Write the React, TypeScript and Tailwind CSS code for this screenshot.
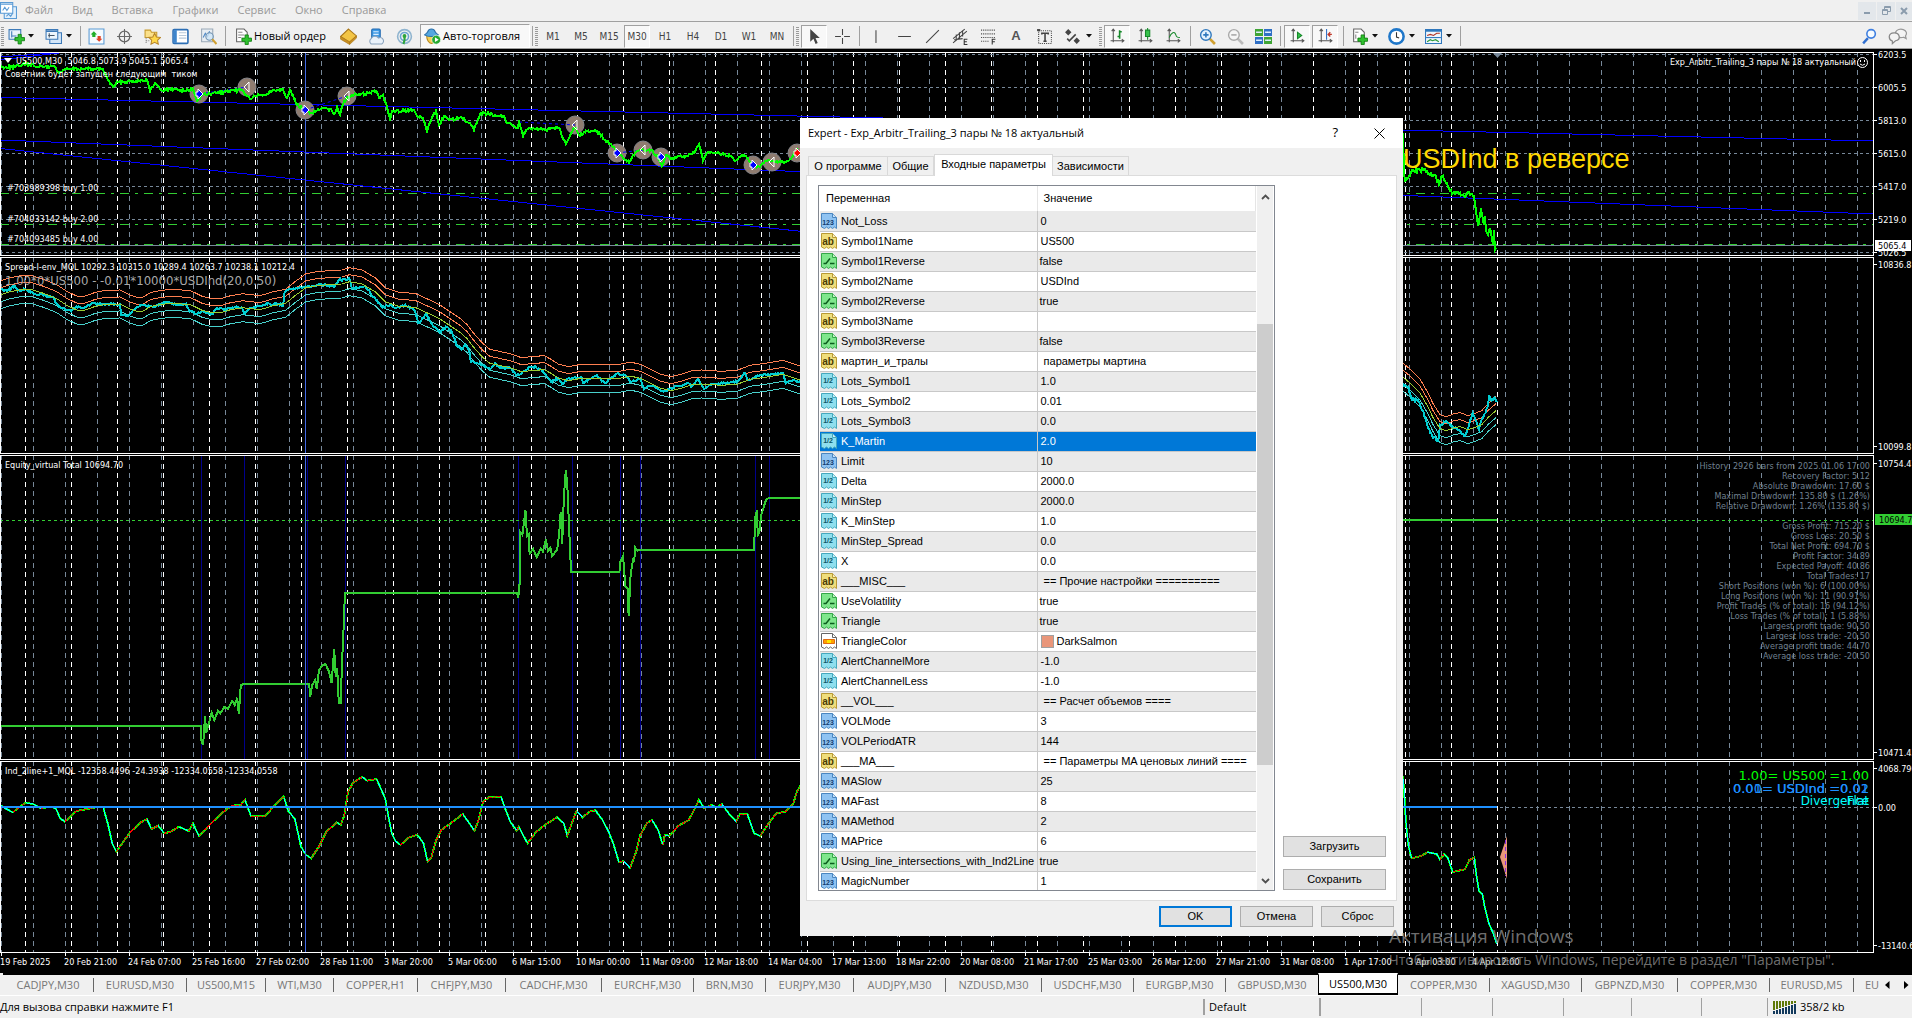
import {ReactNode} from "react";
import clsx from "clsx";

type Kind = "int" | "str" | "bool" | "num" | "color";

interface Param {
    kind: Kind;
    name: string;
    value: string;
}

const params: Param[] = [
    {kind: "int", name: "Not_Loss", value: "0"},
    {kind: "str", name: "Symbol1Name", value: "US500"},
    {kind: "bool", name: "Symbol1Reverse", value: "false"},
    {kind: "str", name: "Symbol2Name", value: "USDInd"},
    {kind: "bool", name: "Symbol2Reverse", value: "true"},
    {kind: "str", name: "Symbol3Name", value: ""},
    {kind: "bool", name: "Symbol3Reverse", value: "false"},
    {kind: "str", name: "мартин_и_тралы", value: " параметры мартина"},
    {kind: "num", name: "Lots_Symbol1", value: "1.0"},
    {kind: "num", name: "Lots_Symbol2", value: "0.01"},
    {kind: "num", name: "Lots_Symbol3", value: "0.0"},
    {kind: "num", name: "K_Martin", value: "2.0"},
    {kind: "int", name: "Limit", value: "10"},
    {kind: "num", name: "Delta", value: "2000.0"},
    {kind: "num", name: "MinStep", value: "2000.0"},
    {kind: "num", name: "K_MinStep", value: "1.0"},
    {kind: "num", name: "MinStep_Spread", value: "0.0"},
    {kind: "num", name: "X", value: "0.0"},
    {kind: "str", name: "___MISC___", value: " == Прочие настройки =========="},
    {kind: "bool", name: "UseVolatility", value: "true"},
    {kind: "bool", name: "Triangle", value: "true"},
    {kind: "color", name: "TriangleColor", value: "DarkSalmon"},
    {kind: "num", name: "AlertChannelMore", value: "-1.0"},
    {kind: "num", name: "AlertChannelLess", value: "-1.0"},
    {kind: "str", name: "__VOL___", value: " == Расчет объемов ===="},
    {kind: "int", name: "VOLMode", value: "3"},
    {kind: "int", name: "VOLPeriodATR", value: "144"},
    {kind: "str", name: "___MA___", value: " == Параметры MA ценовых линий ===="},
    {kind: "int", name: "MASlow", value: "25"},
    {kind: "int", name: "MAFast", value: "8"},
    {kind: "int", name: "MAMethod", value: "2"},
    {kind: "int", name: "MAPrice", value: "6"},
    {kind: "bool", name: "Using_line_intersections_with_Ind2Line", value: "true"},
    {kind: "int", name: "MagicNumber", value: "1"},
];

const chartTabs: [string, number][] = [
    ["CADJPY,M30", 91], ["EURUSD,M30", 93], ["US500,M15", 79], ["WTI,M30", 68], ["COPPER,H1", 84],
    ["CHFJPY,M30", 88], ["CADCHF,M30", 96], ["EURCHF,M30", 92], ["BRN,M30", 72], ["EURJPY,M30", 88],
    ["AUDJPY,M30", 92], ["NZDUSD,M30", 96], ["USDCHF,M30", 92], ["EURGBP,M30", 92], ["GBPUSD,M30", 92],
    ["US500,M30", 80], ["COPPER,M30", 92], ["XAGUSD,M30", 92], ["GBPNZD,M30", 96], ["COPPER,M30", 92],
    ["EURUSD,M5", 84],
];

const stats = [
    "History: 2926 bars from 2025.01.06 17:00", "Recovery Factor: 5.12", "Absolute Drawdown: 17.60 $",
    "Maximal Drawdown: 135.80 $ (1.26%)", "Relative Drawdown: 1.26% (135.80 $)", "",
    "Gross Profit: 715.20 $", "Gross Loss: 20.50 $", "Total Net Profit: 694.70 $", "Profit Factor: 34.89",
    "Expected Payoff: 40.86", "Total Trades: 17", "Short Positions (won %): 6 (100.00%)",
    "Long Positions (won %): 11 (90.91%)", "Profit Trades (% of total): 16 (94.12%)",
    "Loss Trades (% of total): 1 (5.88%)", "Largest profit trade: 90.50", "Largest loss trade: -20.50",
    "Average profit trade: 44.70", "Average loss trade: -20.50",
];

const timeLabels = [
    "19 Feb 2025", "20 Feb 21:00", "24 Feb 07:00", "25 Feb 16:00", "27 Feb 02:00", "28 Feb 11:00", "3 Mar 20:00",
    "5 Mar 06:00", "6 Mar 15:00", "10 Mar 00:00", "11 Mar 09:00", "12 Mar 18:00", "14 Mar 04:00", "17 Mar 13:00",
    "18 Mar 22:00", "20 Mar 08:00", "21 Mar 17:00", "25 Mar 03:00", "26 Mar 12:00", "27 Mar 21:00", "31 Mar 08:00",
    "1 Apr 17:00", "3 Apr 03:00", "4 Apr 12:00",
];

/* ---------- series ---------- */

type Point = [number, number];

const parse = (src: string, kx = 1, ky = 1, dx = 0, dy = 0): Point[] =>
    src.trim().split(/\s+/).map(pair => {
        const [x, y] = pair.split(",").map(Number);
        return [x / kx + dx, y / ky + dy];
    });

const toPath = (points: Point[], shift = 0) =>
    points.map(([x, y], i) => `${i ? "L" : "M"}${x.toFixed(1)} ${(y + shift).toFixed(1)}`).join("");

// fills the gaps between the key points with small ticks
const rough = (points: Point[], amp: number): Point[] => {
    let seed = 7;
    const out: Point[] = [];
    points.forEach(([x, y], i) => {
        out.push([x, y]);
        const next = points[i + 1];
        if (!next) return;
        for (let px = x + 1; px < next[0]; px += 1) {
            seed = (seed * 1103515245 + 12345) % 2147483648;
            const t = (px - x) / (next[0] - x);
            out.push([px, y + (next[1] - y) * t + (seed / 2147483648 - 0.5) * amp]);
        }
    });
    return out;
};

const priceLeft = rough(parse(`0,67 15,67 23,64 30,65 43,67 54,66 59,73 66,69 92,69 102,69 105,73 108,80 113,87 118,82 147,80
150,91 155,83 161,90 176,89 184,91 193,89 197,101 202,95 224,92 242,90 250,99 255,96 265,95 273,90 283,89 287,98 290,90
297,105 305,111 311,113 321,109 331,109 334,114 337,107 340,115 344,101 352,95 365,94 376,91 380,98 383,95 386,103 390,119
392,111 413,110 417,116 423,118 427,131 431,120 436,111 439,125 444,116 449,120 462,118 469,123 474,130 481,113 503,116
508,123 518,128 519,120 523,136 526,130 533,128 546,130 559,128 566,144 571,133 575,128 579,135 587,131 597,131 605,140
612,146 620,155 629,163 635,153 640,150 651,150 658,158 662,166 666,155 671,158 686,156 694,153 699,144 703,161 707,153
719,153 730,156 735,161 742,155 747,158 753,166 760,167 765,161 786,162 791,159 796,151 803,153`), 3);

const priceRight = rough(parse(`1403,133 1404,172 1405,181 1408,178 1412,170 1420,170 1427,171 1432,176 1435,175 1439,185 1442,176
1447,183 1452,194 1458,192 1465,197 1468,192 1474,196 1476,211 1478,226 1481,210 1484,225 1485,216 1486,231 1488,235 1490,228
1493,245 1494,230 1495,250 1496,248`), 4);

const midLeft = parse(`0,120 20,110 45,103 65,105 85,115 110,130 130,150 150,165 165,166 185,155 205,148 235,147 255,162 270,170
280,168 295,155 315,148 345,145 375,150 395,165 415,173 435,172 450,165 475,158 510,164 535,152 560,145 580,120 600,98 620,92
655,88 670,87 685,80 710,87 735,110 755,140 780,153 815,158 835,172 860,190 880,210 900,230 915,250 930,280 945,305 960,325
1000,338 1020,349 1050,347 1065,343 1080,355 1095,370 1115,377 1135,371 1215,370 1235,363 1255,370 1275,385 1295,400 1315,407
1335,400 1355,390 1375,387 1415,391 1445,388 1470,373 1500,367 1535,358 1568,375 1580,378`, 1.96, 3, 0, 255);

const midRight = parse(`0,980 10,988 30,1005 60,1035 80,1070 100,1110 120,1142 140,1148 160,1140 180,1136 205,1145 225,1138
245,1130 265,1108 288,1088`, 3, 3, 1400, 48);

const spreadLeft = rough(parse(`0,103 15,105 28,93 35,107 50,103 65,115 85,120 105,128 110,145 120,160 140,168 150,155 165,160
180,145 200,148 235,148 238,180 250,183 265,160 275,150 300,155 330,140 345,150 365,148 370,165 385,178 395,170 415,178 425,160
440,165 460,155 475,160 480,178 490,160 510,152 525,145 555,150 558,110 575,100 600,97 625,88 655,95 665,75 685,72 690,100
715,93 735,130 750,158 765,150 775,160 795,150 812,165 820,205 835,178 850,215 862,233 875,215 885,228 895,270 905,282 912,268
920,290 923,320 940,325 960,343 970,325 980,338 1000,340 1013,362 1035,340 1050,335 1065,350 1080,380 1095,370 1102,388
1115,370 1140,368 1143,385 1170,360 1185,385 1210,355 1225,360 1235,380 1255,372 1262,402 1275,392 1300,410 1315,400 1350,385
1355,395 1368,372 1380,403 1395,388 1445,380 1460,355 1465,375 1490,360 1535,355 1540,385 1555,375 1575,385`, 1.96, 3, 0, 255), 2);

const spreadRight = rough(parse(`0,1008 10,1008 25,1015 33,1050 55,1060 70,1090 75,1110 85,1140 97,1165 115,1180 120,1130
140,1122 160,1138 175,1145 195,1165 205,1140 218,1095 228,1120 237,1145 245,1115 262,1080 268,1045 275,1058 285,1050
290,1062`, 3, 3, 1400, 48), 3);

const equity = parse(`2,812 393,812 393,850 398,870 402,782 404,835 412,790 415,773 420,795 427,768 432,775 440,755 447,762
455,738 460,750 465,728 468,778 472,690 480,686 606,686 608,727 612,690 618,675 621,703 625,645 632,632 638,627 645,650
650,685 655,582 658,665 661,640 664,745 668,745 670,640 674,500 676,414 1014,414 1015,428 1018,410 1020,232 1024,240 1030,166
1033,243 1036,238 1038,295 1045,282 1052,307 1060,280 1064,290 1070,253 1074,288 1079,278 1082,303 1092,285 1096,235 1099,170
1102,268 1105,130 1109,46 1112,90 1118,310 1120,351 1214,351 1216,320 1221,303 1226,395 1230,400 1232,482 1236,360 1241,310
1243,320 1245,278 1249,287 1253,285 1478,285 1480,190 1484,165 1485,240 1488,235 1492,180 1496,160 1502,133 1508,129
1575,129`, 1.96, 3, 0, 455);

const indLeft = parse(`0,150 10,160 25,172 50,143 65,147 80,160 100,155 110,162 118,190 127,200 150,168 195,155 202,155 212,210
220,265 228,290 255,232 275,203 288,192 297,222 310,212 322,235 335,230 350,215 370,228 378,205 390,243 415,203 440,168 455,152
472,150 480,134 492,183 520,183 540,148 556,125 565,168 578,192 590,275 600,300 610,310 625,275 640,230 660,202 668,210 675,180
682,110 692,83 710,66 720,77 738,72 755,130 762,190 768,235 775,258 785,270 800,248 818,239 830,265 838,320 845,310 855,255
865,225 885,203 907,177 920,205 930,227 938,195 947,140 958,127 982,125 990,160 1000,200 1013,227 1017,215 1025,240 1034,265
1050,232 1070,208 1092,187 1105,205 1112,242 1122,200 1130,168 1142,187 1155,170 1167,166 1180,193 1193,230 1203,270 1213,322
1222,318 1235,338 1247,290 1255,240 1268,205 1278,195 1290,225 1299,270 1303,240 1312,242 1330,212 1350,195 1362,160 1370,134
1380,160 1395,150 1405,158 1415,147 1428,175 1443,200 1450,178 1465,178 1478,235 1490,243 1505,208 1522,175 1540,170 1555,145
1562,110 1568,95 1575,60`, 1.96, 3, 0, 755);

const indRight = parse(`38,900 42,935 48,1030 55,1090 65,1127 95,1120 112,1110 140,1115 150,1130 162,1116 173,1125 188,1165
225,1157 238,1132 253,1125 260,1180 267,1218 277,1225 285,1265 298,1310 308,1330 320,1362`, 3, 2.76, 1390, 450);

const range = (from: number, step: number, count: number) => Array.from({length: count}, (_, i) => from + step * i);

/* ---------- chart ---------- */

const Grid = ({top, bottom}: {top: number; bottom: number}) => (
    <g shapeRendering="crispEdges" fill="none">
        <path d={range(1, 32, 90).map(x => `M${x + 0.5} ${top}V${bottom}`).join("")} stroke="#778899" strokeDasharray="5 4"/>
        <path d={range(25, 46, 33).map(x => `M${x + 0.5} ${top}V${bottom}`).join("")} stroke="#fff" strokeDasharray="5 4"/>
    </g>
);

const CursorLine = ({top, bottom}: {top: number; bottom: number}) => (
    <path d={`M305.5 ${top}V${bottom}`} stroke="#4169e1" shapeRendering="crispEdges"/>
);

interface PanelProps {
    top: number;
    className: string;
    bottom: number;
    axis: [string, number][];
    children: ReactNode;
    overlay?: ReactNode;
    tag?: ReactNode;
}

// one sub-window: the plot with its frame and the value scale on the right
const Panel = ({top, bottom, className, axis, children, overlay, tag}: PanelProps) => (
    <div className={clsx("flex", className)}>
        <div className="relative min-w-0 flex-1 overflow-hidden border border-white">
            <svg className="block h-full w-full" fontFamily="DejaVu Sans Condensed, DejaVu Sans, sans-serif" fontSize="9" fill="#fff">
                <g transform={`translate(-1 ${-top - 1})`}>
                    <Grid top={top} bottom={bottom}/>
                    {children}
                </g>
            </svg>
            {overlay}
        </div>
        <svg className="h-full w-[38px] overflow-visible" fontFamily="DejaVu Sans Condensed, DejaVu Sans, sans-serif" fontSize="9" fill="#fff">
            <g transform={`translate(0 ${-top})`}>
                {axis.map(([label, y]) => (
                    <g key={label}>
                        <path d={`M0 ${y + 0.5}h3`} stroke="#fff"/>
                        <text x="4" y={y + 4}>{label}</text>
                    </g>
                ))}
                {tag}
            </g>
        </svg>
    </div>
);

const buys: Point[] = [[199, 94], [305, 110], [617, 153], [661, 157], [753, 165]];
const closes: Point[] = [[247, 87], [347, 96], [575, 125], [643, 150], [772, 162]];

const Markers = () => (
    <g>
        {[...buys, ...closes, [797, 153] as Point].map(([x, y]) => (
            <circle key={x} cx={x} cy={y} r="9" fill="#8f7c70" stroke="#85858a"/>
        ))}
        <path d="M199 94L247 87M305 110L347 96M519 122L575 125M617 153L643 150" stroke="#00f" strokeDasharray="3 3"/>
    </g>
);

const Arrows = () => (
    <g>
        {[...buys, [797, 153] as Point].map(([x, y]) => (
            <path key={x} d={`M${x - 3} ${y - 2}h2v-3l5 5l-5 5v-3h-2z`} fill={x === 797 ? "#f00" : "#00f"} stroke="#fff"/>
        ))}
        {closes.map(([x, y]) => (
            <path key={x} d={`M${x + 2} ${y - 5}v10l-5 -5z`} fill="none" stroke="#fff"/>
        ))}
    </g>
);

const PricePanel = () => (
    <Panel
        top={52}
        bottom={255}
        className="h-[204px]"
        axis={[["6203.5", 54], ["6005.5", 87], ["5813.0", 120], ["5615.0", 153], ["5417.0", 186], ["5219.0", 219], ["5026.5", 252]]}
        tag={
            <g>
                <rect x="1" y="240" width="36" height="11" fill="#fff"/>
                <text x="4" y="249" fill="#000">5065.4</text>
            </g>
        }
        overlay={
            <div className="absolute top-[3px] right-[5px] flex items-center gap-px font-['DejaVu_Sans_Condensed'] text-[9px] leading-3 text-white">
                Exp_Arbitr_Trailing_3 пары № 18 актуальный
                <svg width="11" height="11" fill="none" stroke="#fff">
                    <circle cx="5.5" cy="5.5" r="5"/>
                    <path d="M3.5 3v2M7.5 3v2M3 7q2.500 2.500 5 0"/>
                </svg>
            </div>
        }
    >
        <g shapeRendering="crispEdges" fill="none">
            <path d={range(54, 33, 7).map(y => `M0 ${y + 0.5}H2600`).join("")} stroke="#778899" strokeDasharray="3 3"/>
            <path d="M0 245.500H2600" stroke="#778899"/>
            <path d="M0 193.500H2600M0 224.500H2600M0 244.500H2600" stroke="#32cd32" strokeDasharray="9 6 3 6"/>
            <path d="M0 57L54 53M0 60L59 53M0 97.500L1873 141M0 140L1873 214M0 148.500L1040 256" stroke="#00f"/>
        </g>
        <CursorLine top={52} bottom={256}/>
        <Markers/>
        <g shapeRendering="crispEdges" fill="none" stroke="#0f0" strokeWidth="2">
            <path d={toPath(priceLeft)}/>
            <path d={toPath(priceRight)}/>
        </g>
        <Arrows/>
        <path d="M1493 53h9l-4.500 5z" fill="#778899"/>
        <path d="M4 58h8l-4 5z"/>
        <text x="16" y="64" xmlSpace="preserve">US500,M30  5046.8 5073.9 5045.1 5065.4</text>
        <text x="5" y="77" xmlSpace="preserve">Советник будет запущен следующим  тиком</text>
        <text x="7" y="191">#703989398 buy 1.00</text>
        <text x="7" y="222">#704033142 buy 2.00</text>
        <text x="7" y="242">#704093485 buy 4.00</text>
        <text x="1403" y="168" fontFamily="Liberation Sans, sans-serif" fontSize="27" fill="#ffd700">USDInd в реверсе</text>
    </Panel>
);

const SpreadPanel = () => (
    <Panel top={257} bottom={453} className="h-[197px]" axis={[["10836.8", 264], ["10099.8", 446]]}>
        <CursorLine top={257} bottom={454}/>
        <g fill="none" shapeRendering="crispEdges">
            {[midLeft, midRight].map((mid, i) => (
                <g key={i}>
                    <path d={toPath(mid, -14)} stroke="#ff7f50"/>
                    <path d={toPath(mid, -7)} stroke="#ff7f50"/>
                    <path d={toPath(mid, 7)} stroke="#48d1cc"/>
                    <path d={toPath(mid, 14)} stroke="#48d1cc"/>
                </g>
            ))}
            <path d={toPath(spreadLeft)} stroke="#00ced1" strokeWidth="2"/>
            <path d={toPath(spreadRight)} stroke="#00ced1" strokeWidth="2"/>
            <path d={toPath(midLeft)} stroke="#9acd32"/>
            <path d={toPath(midRight)} stroke="#9acd32"/>
        </g>
        <text x="5" y="270">Spread-I-env_MQL 10292.3 10315.0 10289.4 10263.7 10238.1 10212.4</text>
        <text x="5" y="285" fontSize="13" fill="#a9a9a9">1.00*0*US500 - -0.01*10000*USDInd(20,0.50)</text>
    </Panel>
);

const EquityPanel = () => (
    <Panel
        top={455}
        bottom={759}
        className="h-[305px]"
        axis={[["10754.47", 463], ["10471.43", 752]]}
        tag={
            <g>
                <rect x="1" y="514" width="37" height="11" fill="#32cd32"/>
                <text x="5" y="523" fill="#000">10694.70</text>
            </g>
        }
        overlay={
            <div className="absolute top-[5px] right-[3px] text-right font-['DejaVu_Sans_Condensed'] text-[9px] leading-[10px] text-[#708090]">
                {stats.map((line, i) => <div key={i} className="h-[10px]">{line}</div>)}
            </div>
        }
    >
        <g shapeRendering="crispEdges" fill="none">
            {[201, 244, 307, 345, 518, 572, 620, 640, 755, 769].map(x => (
                <path key={x} d={`M${x + 0.5} 455V760`} stroke="#00008b"/>
            ))}
            <path d="M0 520.500H2600" stroke="#32cd32" strokeDasharray="3 3"/>
            <path d={toPath(equity)} stroke="#32cd32" strokeWidth="2"/>
            <path d="M1400 520H1497" stroke="#32cd32" strokeWidth="2"/>
        </g>
        <CursorLine top={455} bottom={760}/>
        <text x="5" y="468">Equity_virtual Total 10694.70</text>
    </Panel>
);

// the line is two-tone: one core colour while it falls, the other while it rises
const TwoTone = ({points}: {points: Point[]}) => {
    let falling = "";
    let rising = "";
    points.slice(1).forEach(([x, y], i) => {
        const [px, py] = points[i];
        const piece = `M${px.toFixed(1)} ${py.toFixed(1)}L${x.toFixed(1)} ${y.toFixed(1)}`;
        if (y > py) falling += piece;
        else rising += piece;
    });
    return (
        <g fill="none" shapeRendering="crispEdges">
            <path d={toPath(points)} stroke="#0f0" strokeWidth="2"/>
            <path d={falling} stroke="#0ff"/>
            <path d={rising} stroke="#f00" strokeDasharray="3 1"/>
        </g>
    );
};

const IndicatorPanel = () => (
    <Panel
        top={761}
        bottom={952}
        className="h-[192px]"
        axis={[["4068.790", 768], ["0.00", 807], ["-13140.6", 945]]}
        overlay={
            <div className="absolute top-[7px] right-[4px] text-right font-['DejaVu_Sans'] text-[13px] leading-[13px]">
                <div className="text-[#0f0]">1.00= US500 =1.00</div>
                <div className="relative text-[#1e90ff]">
                    0.00= USDInd =0.02
                    <span className="absolute top-0 right-0">0.01= USDInd =0.01</span>
                </div>
                <div className="relative text-xs leading-[13px] text-[#00ffff]">
                    Divergence
                    <span className="absolute top-0 right-0">Flat</span>
                </div>
            </div>
        }
    >
        <path d="M0 807.500H2600" stroke="#778899" strokeDasharray="3 3" shapeRendering="crispEdges"/>
        <TwoTone points={indLeft}/>
        <TwoTone points={indRight}/>
        <path d="M0 807H1497" stroke="#1e90ff" strokeWidth="2" shapeRendering="crispEdges"/>
        <CursorLine top={761} bottom={953}/>
        <path d="M1500 857l7 -21v43z" fill="#e9967a"/>
        <path d="M1505.500 840v36" stroke="#8a2be2" strokeDasharray="4 3"/>
        <text x="5" y="774">Ind_2line+1_MQL -12358.4496 -24.3938 -12334.0558 -12334.0558</text>
    </Panel>
);

const Chart = () => (
    <main className="flex flex-1 flex-col gap-px bg-black pt-[3px]">
        <PricePanel/>
        <SpreadPanel/>
        <EquityPanel/>
        <IndicatorPanel/>
        <div className="-mt-px flex h-5 overflow-hidden font-['DejaVu_Sans_Condensed'] text-[9px] leading-4 text-white">
            {timeLabels.map(label => (
                <div key={label} className="relative w-16 shrink-0 whitespace-nowrap">
                    <span className="absolute top-0 left-px h-[3px] w-px bg-white"/>
                    <span className="block pt-px">{label}</span>
                </div>
            ))}
        </div>
    </main>
);

/* ---------- toolbar ---------- */

const Icon = ({children, size = 17}: {children: ReactNode; size?: number}) => (
    <svg width={size} height={size} viewBox="0 0 16 16" fill="none" className="shrink-0">{children}</svg>
);

const Sep = ({className = "w-1.5"}: {className?: string}) => (
    <span className={clsx("flex shrink-0 justify-center", className)}><span className="h-5 w-px bg-[#a0a0a0]"/></span>
);

const Grip = () => (
    <span className="flex w-[5px] shrink-0 flex-col items-center gap-px">
        {range(0, 1, 10).map(i => <span key={i} className="h-px w-[3px] bg-[#9a9a9a]"/>)}
    </span>
);

const Tool = ({label, pressed, children, className = "w-7"}: {label: string; pressed?: boolean; children: ReactNode; className?: string}) => (
    <button aria-label={label} className={clsx("flex h-6 shrink-0 items-center justify-center px-px", className)}>
        <span className={clsx("flex h-[23px] w-full items-center justify-center", pressed && "border border-t-[#a0a0a0] border-r-white border-b-white border-l-[#a0a0a0] bg-[#f8f8f8]")}>
            {children}
        </span>
    </button>
);

const Caret = () => (
    <button aria-label="Ещё" className="flex h-6 w-3 shrink-0 items-center">
        <svg width="6" height="4"><path d="M0 0h6l-3 3.500z" fill="#111"/></svg>
    </button>
);

const Plus = ({x, y}: {x: number; y: number}) => (
    <path d={`M${x + 3} ${y}h3v3h3v3h-3v3h-3v-3h-3v-3h3z`} fill="#2fc12f" stroke="#0d7d0d" strokeWidth=".8"/>
);

const Axes = () => <path d="M4 1v12.500M2.500 3L4 1l1.500 2M1.500 12h12.500M12 10.500l2 1.500l-2 1.500" stroke="#555"/>;

const timeframes = ["M1", "M5", "M15", "M30", "H1", "H4", "D1", "W1", "MN"];

const Toolbar = () => (
    <div className="flex h-[27px] items-center overflow-hidden border-b border-[#a0a0a0] bg-[#f0f0f0] pt-[2px]">
        <Grip/>
        <Tool label="Новый график" className="w-[23px]">
            <Icon><path d="M1 1.500h11v9H1z" fill="#eaf3fc" stroke="#3d7ab8"/><path d="M3.500 3v6M3 7.500h5" stroke="#3d7ab8"/><Plus x={6.500} y={6}/></Icon>
        </Tool>
        <Caret/>
        <Tool label="Профили" className="w-[26px]">
            <Icon><path d="M4.500 4.500h11v10h-11z" fill="#d3e6f8" stroke="#3d7ab8"/><path d="M1 1.500h11v9H1z" fill="#eef6fd" stroke="#3d7ab8"/><path d="M1 3h11" stroke="#3d7ab8" strokeWidth="1.500"/><path d="M4 5v4M3 7h6" stroke="#456"/></Icon>
        </Tool>
        <Caret/>
        <Sep className="w-1"/>
        <Tool label="Обзор рынка"><Icon><path d="M1 1h14v14H1z" fill="#f6fbff" stroke="#5b9bd5"/><path d="M5.500 3l3 3h-1.500v2.500H4V6H2.500z" fill="#1fae2a"/><path d="M10.500 13l-3-3H9V7.500h3V10h1.500z" fill="#e0442a"/></Icon></Tool>
        <Tool label="Окно данных"><Icon><circle cx="8" cy="8" r="5" stroke="#666" strokeWidth="1.200"/><path d="M8 1v14M1 8h14" stroke="#666"/></Icon></Tool>
        <Tool label="Навигатор"><Icon><path d="M1 2h5l1 2h5v5H1z" fill="#fbe08a" stroke="#c79a2a"/><path d="M2 9v6M2 12h3" stroke="#888" strokeDasharray="1 1"/><path d="M10 5l1.700 3.400 3.800.5-2.700 2.600.6 3.700L10 13.500l-3.400 1.700.6-3.700L4.500 8.900l3.800-.5z" fill="#ffd84a" stroke="#b8862b"/></Icon></Tool>
        <Tool label="Терминал"><Icon><rect x="1" y="1.500" width="14" height="13" rx="1" fill="#fff" stroke="#2d6fb5" strokeWidth="1.500"/><path d="M1.500 2h3v12h-3z" fill="#3d84cc"/><path d="M6.500 4.500h7M6.500 7h7M6.500 9.500h7" stroke="#b9c9d9"/></Icon></Tool>
        <Tool label="Тестер стратегий"><Icon><path d="M1.500 1h10.500v12H1.500z" fill="#e7edf3" stroke="#9aa9b8"/><path d="M3 9l2-4 2 3 2-5" stroke="#4a86c5"/><circle cx="9" cy="8" r="3.500" fill="#cfe6f8" fillOpacity=".8" stroke="#6d8fae"/><path d="M11.500 10.500l4 4.500" stroke="#d0a030" strokeWidth="2"/></Icon></Tool>
        <Sep/>
        <button className="flex h-6 w-[106px] shrink-0 items-center gap-[2px] pl-[7px] whitespace-nowrap text-black">
            <Icon><path d="M1.500 1h7l3 3v9h-10z" fill="#fff" stroke="#666"/><path d="M3 4h4M3 6.500h6M3 9h3" stroke="#888"/><Plus x={6.500} y={6.500}/></Icon>
            <span className="text-[11px]">Новый ордер</span>
        </button>
        <Tool label="MetaEditor"><Icon><path d="M8 1l7.500 6.500-6.500 6L.5 8z" fill="#f3c545" stroke="#a9771a"/><path d="M.5 8v2.500l8.500 5v-2.500zM9 13v2.500l6.500-6V7.500z" fill="#c98f22" stroke="#a9771a" strokeWidth=".6"/></Icon></Tool>
        <Tool label="Облако"><Icon><rect x="3.500" y="1" width="8" height="9" rx="1" fill="#3f9be6" stroke="#1f67ae"/><path d="M5 3.500h5M5 6h5" stroke="#d7ecff"/><path d="M3 15a3 3 0 0 1 0-5 4 4 0 0 1 7-.5 3 3 0 0 1 3 5.500z" fill="#e9f1f9" stroke="#8aa3bd"/></Icon></Tool>
        <Tool label="Сигналы"><Icon><circle cx="8" cy="8" r="6.500" stroke="#8fb4cf" strokeWidth="1.500"/><circle cx="8" cy="8" r="3.800" stroke="#6aa6cf" strokeWidth="1.500"/><circle cx="8" cy="7.500" r="1.800" fill="#2fa53a"/><path d="M8 8c.5 3 0 5-1 7" stroke="#2fa53a" strokeWidth="2"/></Icon></Tool>
        <button aria-pressed="true" className="ml-[2px] flex h-6 w-[110px] shrink-0 items-center gap-[2px] border border-t-[#a0a0a0] border-r-white border-b-white border-l-[#a0a0a0] bg-[#f8f8f8] pl-[3px] whitespace-nowrap text-black">
            <Icon><path d="M2.500 7h9c0 4-2 7.500-4.500 7.500S2.500 11 2.500 7z" fill="#f4cf55" stroke="#b98a20"/><path d="M.5 6.500C2 5 3 5 3.500 3.500S5 1 7 1s3 1 3.500 2.500 1.500 1.500 3 3c-3 2-10 2-13 0z" fill="#54a7e0" stroke="#2a6fa8"/><circle cx="11.500" cy="11" r="4.200" fill="#25a92f" stroke="#fff" strokeWidth=".6"/><path d="M10.300 8.800v4.400l3.500-2.200z" fill="#fff"/></Icon>
            <span className="text-[11px]">Авто-торговля</span>
        </button>
        <Sep className="w-1"/>
        <Grip/>
        {timeframes.map(tf => (
            <Tool key={tf} label={tf} pressed={tf === "M30"}><span className="font-['DejaVu_Sans_Condensed'] text-[10px] text-[#444]">{tf}</span></Tool>
        ))}
        <Sep className="w-1"/>
        <Grip/>
        <Tool label="Курсор" pressed><Icon><path d="M4 1v12l3-3 2 5 2-1-2-4.500h4z" fill="#444"/></Icon></Tool>
        <Tool label="Перекрестие"><Icon><path d="M8 1v5.500M8 9.500V15M1 8h5.500M9.500 8H15" stroke="#444"/></Icon></Tool>
        <Sep/>
        <Tool label="Вертикальная линия"><Icon><path d="M7.500 2v12" stroke="#444"/></Icon></Tool>
        <Tool label="Горизонтальная линия"><Icon><path d="M2 8h12" stroke="#444"/></Icon></Tool>
        <Tool label="Трендовая линия"><Icon><path d="M2 14L14 2" stroke="#444"/></Icon></Tool>
        <Tool label="Канал"><Icon><path d="M1 10L12 1M1 14L14 3M4 6v6M7 4v7M10 2v6M2 11l8-1" stroke="#444"/><path d="M14.500 10.500H11.500v5h3M11.500 13h2.500" stroke="#333"/></Icon></Tool>
        <Tool label="Фибоначчи"><Icon><path d="M1 2h13M1 5.500h13M1 9h13M1 12.500h8" stroke="#444" strokeDasharray="1 1"/><path d="M14.500 10.500h-3v5M11.500 13h2.500" stroke="#333"/></Icon></Tool>
        <Tool label="Текст"><span className="font-['Liberation_Sans'] text-[13px] font-bold text-[#555]">A</span></Tool>
        <Tool label="Метка"><Icon><path d="M2.500 2.500h12v12h-12z" stroke="#444" strokeDasharray="1 1"/><path d="M1 1h3v2H1z" fill="#444"/><path d="M5.500 6V5h6v1M8.500 5v7.500M7 12.500h3" stroke="#444" strokeWidth="1.500"/></Icon></Tool>
        <Tool label="Стрелки"><Icon><path d="M4 1l3 3-3 3-3-3zM12 9l3 3-3 3-3-3z" fill="#444"/><path d="M3 10l2 2 6-6" stroke="#444" strokeWidth="1.500"/></Icon></Tool>
        <Caret/>
        <Grip/>
        <Tool label="Бары" pressed><Icon><Axes/><path d="M10 2v8M10 3.500h2M8 8h2" stroke="#16882a" strokeWidth="1.500"/></Icon></Tool>
        <Tool label="Свечи"><Icon><Axes/><path d="M10 0v11" stroke="#16882a"/><path d="M8 2h4v6H8z" fill="#35c24a" stroke="#16882a"/></Icon></Tool>
        <Tool label="Линия"><Icon><Axes/><path d="M4 9c2-5 5-6 6-3s2 3 4 3" stroke="#16882a"/></Icon></Tool>
        <Sep/>
        <Tool label="Увеличить"><Icon><path d="M10 10l5 5" stroke="#d0a030" strokeWidth="2.500"/><circle cx="6.500" cy="6.500" r="5" fill="#e3f2fd" stroke="#2f78bd" strokeWidth="1.300"/><path d="M4 6.500h5M6.500 4v5" stroke="#2f78bd" strokeWidth="1.500"/></Icon></Tool>
        <Tool label="Уменьшить"><Icon><path d="M10 10l5 5" stroke="#bbb" strokeWidth="2.500"/><circle cx="6.500" cy="6.500" r="5" fill="#f6f6f6" stroke="#aaa" strokeWidth="1.300"/><path d="M4 6.500h5" stroke="#aaa" strokeWidth="1.500"/></Icon></Tool>
        <Tool label="Мозаика"><Icon><path d="M0 1h7.500v6.500H0zM8.500 8.500H16V15H8.500z" fill="#3fa535"/><path d="M8.500 1H16v6.500H8.500zM0 8.500h7.500V15H0z" fill="#2f6fc5"/><path d="M1 4h5.500M9.500 4H15M1 11.500h5.500M9.500 11.500H15" stroke="#dff0ff" strokeWidth="1.500"/></Icon></Tool>
        <Sep/>
        <Tool label="Автопрокрутка" pressed><Icon><Axes/><path d="M8 4v6l4-3z" fill="#35c24a" stroke="#16882a"/></Icon></Tool>
        <Tool label="Сдвиг графика" pressed><Icon><Axes/><path d="M9 1v10" stroke="#2f6fc5"/><path d="M14 6h-3M12.500 4L10.500 6l2 2" stroke="#c0392b" strokeWidth="1.300"/></Icon></Tool>
        <Sep className="w-2"/>
        <Tool label="Индикаторы" className="w-[25px]"><Icon><path d="M2.500 1h7l3 3v9h-10z" fill="#fff" stroke="#666"/><path d="M4 4h3M4.500 6v4" stroke="#888"/><Plus x={6.500} y={6.500}/></Icon></Tool>
        <Caret/>
        <Tool label="Периоды" className="w-[25px]"><Icon><circle cx="8" cy="8" r="6.700" fill="#fff" stroke="#1f77c9" strokeWidth="2.400"/><path d="M8 4v4.500l2.500 1" stroke="#333"/></Icon></Tool>
        <Caret/>
        <Tool label="Шаблоны" className="w-[25px]"><Icon><path d="M.5 1.500h15v13H.5z" fill="#eef6fd" stroke="#2f78bd"/><path d="M.5 2.500h15" stroke="#2f78bd" strokeWidth="2"/><path d="M2 7l3-1 3 1 3-2h3" stroke="#b03020"/><path d="M1 9h14" stroke="#2f78bd"/><path d="M2 13l3-2 2 1 3-1 3 2" stroke="#2a9a38"/></Icon></Tool>
        <Caret/>
        <Sep className="w-1"/>
        <span className="flex-1"/>
        <Tool label="Поиск"><Icon><path d="M6.500 9.500L2 14.500" stroke="#2f6fd0" strokeWidth="2.200"/><circle cx="9.500" cy="5.500" r="4" fill="#f6fbff" stroke="#3f7fe0" strokeWidth="1.500"/></Icon></Tool>
        <Tool label="Чат" className="w-[29px]"><Icon size={20}><path d="M6 5a4.500 3.500 0 1 1 8 3l.5 2-2-1C8 10 6 8 6 5z" fill="#f4f4f4" stroke="#999"/><path d="M1 8.500a4 3.200 0 1 1 5 3.300L3.500 14v-2C2 11.500 1 10 1 8.500z" fill="#f4f4f4" stroke="#888"/></Icon></Tool>
    </div>
);

const MenuBar = () => (
    <header className="flex h-[22px] items-center border-b border-[#a0a0a0] bg-[#f0f0f0]">
        <Icon><path d="M4 4.500h11.500v11H4z" fill="#e3f0fb" stroke="#5a9bd5"/><path d="M.5.500H12v10H.5z" fill="#fff" stroke="#5a9bd5"/><path d="M1 2h11M2.500 8l2-3 2 3 2-3M6 13.500l2-2 2 2 2-3" stroke="#5a9bd5"/></Icon>
        <nav className="ml-[8px] flex flex-1 gap-[19px] text-[11px] text-[#999]">
            {["Файл", "Вид", "Вставка", "Графики", "Сервис", "Окно", "Справка"].map(item => (
                <a key={item} href="#">{item}</a>
            ))}
        </nav>
        <div className="flex gap-px text-[#8b9cad]">
            <button aria-label="Свернуть" className="flex h-[18px] w-[18px] items-center justify-center bg-[#e3e7eb]"><svg width="8" height="8"><path d="M1 6h6" stroke="currentColor" strokeWidth="2"/></svg></button>
            <button aria-label="Восстановить" className="flex h-[18px] w-[18px] items-center justify-center bg-[#e3e7eb]"><svg width="9" height="9" fill="none" stroke="currentColor"><path d="M2.500 3V.5h6v5H6M.5 3.500h5v5h-5zM2.500 1.500h6M.5 4.500h5"/></svg></button>
            <button aria-label="Закрыть" className="flex h-[18px] w-[16px] items-center justify-center bg-[#e3e7eb]"><svg width="8" height="8"><path d="M1 1l6 6M7 1l-6 6" stroke="currentColor" strokeWidth="2"/></svg></button>
        </div>
    </header>
);

/* ---------- expert dialog ---------- */

const kindColors: Record<Kind, {fill: string; stroke: string; ink: string; label: string}> = {
    int: {fill: "#8fc3f2", stroke: "#4a86c0", ink: "#123c6e", label: "123"},
    str: {fill: "#f0de7c", stroke: "#b89a35", ink: "#4a3c05", label: "ab"},
    bool: {fill: "#7fe68c", stroke: "#35a748", ink: "#0b5c1c", label: ""},
    num: {fill: "#8fdfee", stroke: "#45a8bd", ink: "#0d5566", label: "1/2"},
    color: {fill: "#fff", stroke: "#666", ink: "#000", label: ""},
};

const KindIcon = ({kind}: {kind: Kind}) => {
    const c = kindColors[kind];
    return (
        <svg width="16" height="16" className="shrink-0">
            <path d="M.5.500h11l4 4v11l-2-1.500-2 1.500-2-1.500-2 1.500-2-1.500-2 1.500L.5 14z" fill={c.fill} stroke={c.stroke}/>
            <path d="M11.500.500v4h4" fill="#fff" fillOpacity=".5" stroke={c.stroke}/>
            {kind === "bool" && <path d="M2.500 10.500h2.500l4-5M9 10.500h4.500" fill="none" stroke={c.ink} strokeWidth="1.500"/>}
            {kind === "color" && (
                <>
                    <path d="M2.500 6.500h11v4h-11z" fill="#ffa000" stroke="#e06a10"/>
                    <path d="M6 7h4v3H6z" fill="#ffe600"/>
                </>
            )}
            <text x="7" y={kind === "num" ? 10 : 12} textAnchor="middle" fontFamily="Liberation Sans, sans-serif" fontWeight="bold" fontSize={kind === "str" ? 10 : 7} fill={c.ink}>
                {c.label}
            </text>
        </svg>
    );
};

const DialogButton = ({children, primary}: {children: ReactNode; primary?: boolean}) => (
    <button className={clsx("flex h-[21px] w-[73px] items-center justify-center bg-[#e1e1e1]", primary ? "border-2 border-[#0078d7]" : "border border-[#adadad]")}>
        {children}
    </button>
);

const DialogTab = ({children, active, className}: {children: ReactNode; active?: boolean; className: string}) => (
    <button
        role="tab"
        aria-selected={!!active}
        className={clsx("border border-[#d9d9d9]", active ? "z-10 -mb-px h-[22px] border-b-0 bg-white pb-[3px]" : "h-[19px] border-b-0 bg-[#f0f0f0]", className)}
    >
        {children}
    </button>
);

const ExpertDialog = () => (
    <section role="dialog" aria-label="Expert" className="absolute top-[118px] left-[800px] flex h-[818px] w-[603px] flex-col bg-[#f0f0f0] font-['Liberation_Sans'] text-[11px] text-black">
        <div className="flex h-[30px] shrink-0 items-center bg-white pr-[18px] pl-2 font-['Open_Sans']">
            <h1 className="flex-1 text-[11px]">Expert - Exp_Arbitr_Trailing_3 пары № 18 актуальный</h1>
            <button aria-label="Справка" className="mr-[36px] text-[13px]">?</button>
            <button aria-label="Закрыть"><svg width="11" height="11"><path d="M.5.500l10 10M10.500.500l-10 10" stroke="#000"/></svg></button>
        </div>
        <div role="tablist" className="mt-[6px] flex h-[22px] items-end pl-2">
            <DialogTab className="w-[80px]">О программе</DialogTab>
            <DialogTab className="w-[46px] border-l-0">Общие</DialogTab>
            <DialogTab className="w-[119px]" active>Входные параметры</DialogTab>
            <DialogTab className="w-[76px] border-l-0">Зависимости</DialogTab>
        </div>
        <div className="mr-[6px] ml-[6px] flex flex-1 gap-2 border border-[#dcdcdc] bg-white pt-[9px] pb-[9px] pl-[11px]">
            <div className="flex h-[706px] w-[457px] border border-[#828790] pl-px">
                <div className="h-full flex-1 overflow-hidden">
                    <table className="w-full table-fixed border-collapse text-left">
                        <colgroup>
                            <col className="w-[217px]"/>
                            <col/>
                        </colgroup>
                        <thead>
                            <tr className="h-[25px]">
                                <th className="border-r border-[#e5e5e5] pl-1.5 font-normal">Переменная</th>
                                <th className="border-r border-[#e5e5e5] pl-1.5 font-normal">Значение</th>
                            </tr>
                        </thead>
                        <tbody>
                            {params.map((p, i) => {
                                const selected = p.name === "K_Martin";
                                return (
                                    <tr key={p.name} className={clsx("h-5 border-b border-[#c8c8c8]", selected ? "bg-[#0078d7] text-white" : i % 2 === 0 ? "bg-[#eaeaea]" : "bg-white")}>
                                        <td className="border-r border-[#c8c8c8] p-0 pl-px">
                                            <div className="flex h-[19px] items-center gap-1 whitespace-nowrap"><KindIcon kind={p.kind}/>{p.name}</div>
                                        </td>
                                        <td className={clsx("p-0", p.kind === "bool" ? "pl-0.5" : "pl-[3px]")}>
                                            <div className="flex h-[19px] items-center gap-[3px] whitespace-pre">
                                                {p.kind === "color" && <span className="h-[13px] w-[13px] border border-[#a0a0a0] bg-[#e9967a]"/>}
                                                {p.value}
                                            </div>
                                        </td>
                                    </tr>
                                );
                            })}
                        </tbody>
                    </table>
                </div>
                <div className="mr-px ml-px flex w-[16px] flex-col items-center bg-[#f0f0f0]">
                    <svg width="9" height="6" className="mt-2" fill="none"><path d="M1 5l3.500-3.500L8 5" stroke="#505050" strokeWidth="1.800"/></svg>
                    <div className="mt-[124px] h-[441px] w-full bg-[#cdcdcd]"/>
                    <svg width="9" height="6" className="mt-auto mb-1.5" fill="none"><path d="M1 1l3.500 3.500L8 1" stroke="#505050" strokeWidth="1.800"/></svg>
                </div>
            </div>
            <div className="flex flex-col justify-end gap-[12px] pb-[1px]">
                <button className="h-[21px] w-[103px] border border-[#adadad] bg-[#e1e1e1]">Загрузить</button>
                <button className="h-[21px] w-[103px] border border-[#adadad] bg-[#e1e1e1]">Сохранить</button>
            </div>
        </div>
        <div className="flex h-[35px] shrink-0 items-start justify-end gap-2 pt-[5px] pr-[9px]">
            <DialogButton primary>OK</DialogButton>
            <DialogButton>Отмена</DialogButton>
            <DialogButton>Сброс</DialogButton>
        </div>
    </section>
);

/* ---------- bottom bars ---------- */

const ChartTabs = () => (
    <div className="flex h-[23px] items-start overflow-hidden border-b border-white bg-[#f0f0f0] pl-[3px] text-[11px] text-[#777]">
        {chartTabs.map(([label, width], i) => {
            const active = label === "US500,M30";
            const beforeActive = chartTabs[i + 1]?.[0] === "US500,M30";
            return (
                <button
                    key={i}
                    className={clsx(
                        "flex h-[22px] shrink-0 items-center justify-center border-t-2 border-t-black",
                        active && "h-[21px] border-x border-b-2 border-black border-t-white bg-white text-black",
                    )}
                    style={{width}}
                >
                    <span className="flex-1">{label}</span>
                    {!active && !beforeActive && <span className="h-3.5 w-px bg-[#666]"/>}
                </button>
            );
        })}
        <div className="flex h-[22px] flex-1 items-center border-t-2 border-black pl-[11px]">
            EU
            <button aria-label="Влево" className="ml-[6px]"><svg width="5" height="8"><path d="M4.500 0v8L0 4z" fill="#000"/></svg></button>
            <button aria-label="Вправо" className="ml-[14px]"><svg width="5" height="8"><path d="M0 0v8l4.500-4z" fill="#000"/></svg></button>
        </div>
    </div>
);

const StatusBar = () => (
    <footer className="flex h-[22px] items-center bg-[#f0f0f0] text-[11px] text-black">
        <span className="flex-1">Для вызова справки нажмите F1</span>
        <span className="w-[116px] border-l-2 border-[#a0a0a0] pl-1">Default</span>
        <span className="h-[18px] w-[102px] border-l-2 border-[#a0a0a0]"/>
        <span className="h-[18px] w-[71px] border-l border-[#a0a0a0]"/>
        <span className="h-[18px] w-[71px] border-l border-[#a0a0a0]"/>
        <span className="h-[18px] w-[68px] border-l border-[#a0a0a0]"/>
        <span className="h-[18px] w-[70px] border-l border-[#a0a0a0]"/>
        <span className="h-[18px] w-[66px] border-l border-[#a0a0a0]"/>
        <span className="flex h-[18px] w-[145px] items-center gap-1 border-l border-[#a0a0a0] pl-[5px]">
            <svg width="23" height="13" shapeRendering="crispEdges">
                {range(0, 3, 8).map((x, i) => (
                    <g key={x}>
                        <rect x={x} y="0" width="2" height={9 - i} fill="#5f7a0a"/>
                        <rect x={x} y={10 - i} width="2" height={3 + i} fill="#12395c"/>
                    </g>
                ))}
            </svg>
            358/2 kb
        </span>
    </footer>
);

const App = () => (
    <div className="relative flex min-h-screen flex-col overflow-hidden bg-black font-['Open_Sans',sans-serif]">
        <MenuBar/>
        <Toolbar/>
        <Chart/>
        <ChartTabs/>
        <StatusBar/>
        <ExpertDialog/>
        <div className="pointer-events-none absolute bottom-12 left-[1389px] whitespace-nowrap text-[#8c8c8c]/80">
            <p className="text-[19px] leading-7">Активация Windows</p>
            <p className="text-[14px] leading-5">Чтобы активировать Windows, перейдите в раздел "Параметры".</p>
        </div>
    </div>
);

export default App;
